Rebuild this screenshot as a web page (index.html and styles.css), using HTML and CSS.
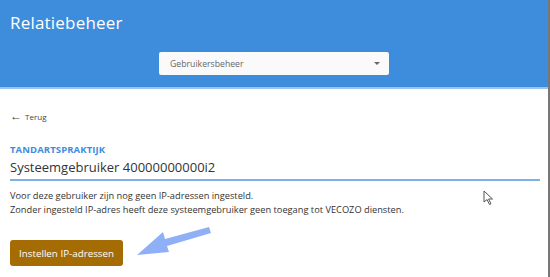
FILE: index.html
```html
<!DOCTYPE html>
<html lang="nl">
<head>
    <meta charset="UTF-8">
    <meta name="viewport" content="width=device-width, initial-scale=1.0">
    <title>Relatiebeheer</title>
    <link rel="stylesheet" href="styles.css">
</head>
<body>
<div class="pagina">

    <!-- Kop met titel en keuzemenu -->
    <header class="kop">
        <h1>Relatiebeheer</h1>
        <div class="keuze">
            <span>Gebruikersbeheer</span>
            <span class="pijltje"></span>
        </div>
    </header>

    <main class="inhoud">
        <a class="terug" href="#"><span class="terugPijl">&larr;</span> Terug</a>

        <div class="label">TANDARTSPRAKTIJK</div>
        <div class="naam">Systeemgebruiker 40000000000i2</div>

        <p class="melding">
            Voor deze gebruiker zijn nog geen IP-adressen ingesteld.<br>
            Zonder ingesteld IP-adres heeft deze systeemgebruiker geen toegang tot VECOZO diensten.
        </p>

        <button type="button" class="knop">Instellen IP-adressen</button>
    </main>

    <!-- Aanwijspijl -->
    <svg class="aanwijzer" width="76" height="30" viewBox="0 0 76 30">
        <polygon points="74,6 72,0 28,12 26,5 0,28 32,25 30,19" fill="#8fb0f7"/>
    </svg>

    <!-- Muiscursor -->
    <svg class="cursor" width="12" height="16" viewBox="0 0 12 16">
        <path d="M1 1 L1 12 L4 9.5 L6.5 14.5 L8 13.8 L5.6 9 L9.5 9 Z" fill="#fff" stroke="#555" stroke-width="1"/>
    </svg>
</div>
</body>
</html>
```

FILE: styles.css
```css
html, body {
    margin: 0;
    padding: 0;
}

body {
    font-family: "Open Sans", "Liberation Sans", sans-serif;
    background-color: #fff;
    color: #333;
}

.pagina {
    position: relative;
    width: 548px;
    height: 277px;
    border-right: 2px solid #777;
    overflow: hidden;
}

.kop {
    background-color: #3d8ddc;
    height: 87px;
    border-bottom: 2px solid #9cc4ec;
    padding: 0 10px;
    box-sizing: content-box;
}

.kop h1 {
    margin: 0;
    padding-top: 11px;
    font-family: "Open Sans", sans-serif;
    font-weight: 400;
    font-size: 17px;
    line-height: 24px;
    color: #fff;
    letter-spacing: 0.2px;
}

.keuze {
    margin: 17px 0 0 149px;
    width: 230px;
    height: 23px;
    box-sizing: border-box;
    background-color: #fafafa;
    border-radius: 2px;
    display: flex;
    align-items: center;
    justify-content: space-between;
    padding: 0 9px 0 11px;
    font-size: 8.7px;
    color: #666;
}

.pijltje {
    width: 0;
    height: 0;
    border-left: 3px solid transparent;
    border-right: 3px solid transparent;
    border-top: 3px solid #666;
}

.inhoud {
    padding: 0 10px;
}

.terug {
    display: block;
    margin-top: 22px;
    font-size: 8px;
    color: #444;
    text-decoration: none;
}

.terugPijl {
    font-size: 12px;
    line-height: 8px;
    margin-right: 1px;
}

.label {
    margin-top: 21px;
    font-size: 9.5px;
    font-weight: 700;
    color: #3d8ddc;
    letter-spacing: 0.1px;
}

.naam {
    margin-top: 1px;
    width: 530px;
    font-size: 13px;
    line-height: 21px;
    color: #333;
    border-bottom: 2px solid #80b1e2;
    padding-bottom: 1px;
}

.melding {
    margin: 8px 0 0 0;
    font-size: 9.25px;
    line-height: 14px;
    color: #333;
}

.knop {
    margin-top: 23px;
    width: 113px;
    height: 26px;
    background-color: #a56c03;
    color: #fff;
    border: none;
    border-radius: 3px;
    font-family: "Open Sans", sans-serif;
    font-size: 9.8px;
    padding: 0;
}

.aanwijzer {
    position: absolute;
    left: 137px;
    top: 227px;
}

.cursor {
    position: absolute;
    left: 483px;
    top: 190px;
}
```
